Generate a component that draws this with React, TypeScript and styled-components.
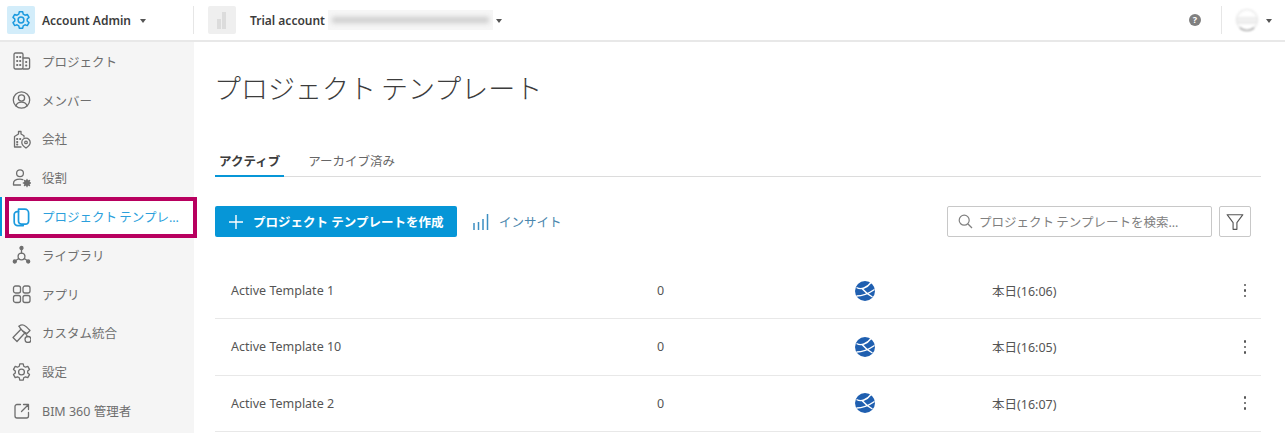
import React from "react";
import styled, { createGlobalStyle } from "styled-components";

const FONT = `"Noto Sans", "Noto Sans CJK JP", sans-serif`;

const GlobalStyle = createGlobalStyle`
  html, body {
    margin: 0;
    padding: 0;
    background: #fff;
    overflow: hidden;
  }
  * { box-sizing: border-box; }
`;

const Page = styled.div`
  width: 1285px;
  height: 433px;
  display: flex;
  flex-direction: column;
  font-family: ${FONT};
  color: #3c3c3c;
  overflow: hidden;
`;

const Header = styled.header`
  height: 42px;
  flex-shrink: 0;
  display: flex;
  align-items: center;
  padding: 0 13px 0 7px;
  background: #fff;
  border-bottom: 2px solid #e8e8e8;
`;

const Tile = styled.div<{ $active?: boolean }>`
  width: 28px;
  height: 28px;
  border-radius: 2px;
  display: flex;
  align-items: center;
  justify-content: center;
  background: ${(p) => (p.$active ? "#d3edfa" : "#efefef")};
  color: ${(p) => (p.$active ? "#1b9ade" : "#dcdcdc")};
`;

const HeaderLabel = styled.span<{ $gap: number }>`
  margin-left: ${(p) => p.$gap}px;
  font-size: 12px;
  font-weight: 600;
  color: #3c3c3c;
  white-space: nowrap;
`;

const Caret = styled.span<{ $gap: number }>`
  width: 0;
  height: 0;
  margin-left: ${(p) => p.$gap}px;
  margin-top: 1px;
  border-left: 3.5px solid transparent;
  border-right: 3.5px solid transparent;
  border-top: 4px solid #555;
`;

const HeaderDivider = styled.div<{ $left: number; $right: number }>`
  width: 1px;
  height: 28px;
  margin-left: ${(p) => p.$left}px;
  margin-right: ${(p) => p.$right}px;
  background: #e6e6e6;
`;

const BlurBox = styled.div`
  width: 165px;
  height: 20px;
  margin-left: 3px;
  display: flex;
  align-items: center;
  padding: 0 4px;
  background: #f6f6f6;
`;

const BlurBar = styled.div`
  width: 100%;
  height: 6px;
  background: #cdcdcd;
  filter: blur(2.5px);
`;

const Spacer = styled.div`
  flex: 1;
`;

const HelpBadge = styled.div`
  width: 12px;
  height: 12px;
  border-radius: 50%;
  background: #808080;
  color: #fff;
  font-size: 9px;
  font-weight: 700;
  line-height: 12px;
  text-align: center;
`;

const Avatar = styled.div`
  width: 22px;
  height: 22px;
  border-radius: 50%;
  border: 1px solid #e4e4e4;
  border-bottom: 1px solid #8c8c8c;
  background: linear-gradient(#fff 30%, #ececec 40%, #f5f5f5 55%, #e6e6e6 62%, #fff 74%);
  filter: blur(0.8px);
`;

const Body = styled.div`
  flex: 1;
  display: flex;
  min-height: 0;
`;

const Sidebar = styled.nav`
  width: 194px;
  flex-shrink: 0;
  background: #f5f5f5;
  position: relative;
`;

const NavItem = styled.div<{ $active?: boolean }>`
  height: 38.8px;
  display: flex;
  align-items: center;
  padding-left: 12px;
  gap: 11px;
  font-size: 12.5px;
  word-spacing: ${(p) => (p.$active ? "-1px" : "0")};
  color: ${(p) => (p.$active ? "#2b9fdc" : "#6e6e6e")};
  background: ${(p) => (p.$active ? "#fff" : "transparent")};
  box-shadow: ${(p) => (p.$active ? "inset 2px 0 0 #0696d7" : "none")};
  white-space: nowrap;
`;

const NavIcon = styled.svg`
  width: 19px;
  height: 20px;
  flex-shrink: 0;
  fill: none;
  stroke: currentColor;
  stroke-width: 1.3;
  stroke-linecap: round;
  stroke-linejoin: round;
`;

const NavIconSlot = styled.span<{ $active?: boolean }>`
  display: flex;
  color: ${(p) => (p.$active ? "#1b9ade" : "#6e6e6e")};
`;

/* annotation drawn over the screenshot */
const Highlight = styled.div`
  position: absolute;
  left: 5px;
  top: 155px;
  width: 192px;
  height: 41px;
  border: 4px solid #b8005f;
  pointer-events: none;
`;

const Main = styled.main`
  flex: 1;
  min-width: 0;
  padding: 0 24px 0 21px;
  background: #fff;
`;

const Title = styled.h1`
  margin: 25px 0 0 -1px;
  height: 44px;
  font-size: 27px;
  font-weight: 300;
  word-spacing: -2px;
  line-height: 44px;
  color: #3c3c3c;
  white-space: nowrap;
`;

const Tabs = styled.div`
  margin-top: 34px;
  height: 32px;
  display: flex;
  gap: 20px;
  border-bottom: 1px solid #dcdcdc;
`;

const Tab = styled.div<{ $active?: boolean }>`
  padding: 0 4px;
  height: 32px;
  line-height: 34px;
  font-size: 12.5px;
  font-weight: ${(p) => (p.$active ? 600 : 400)};
  color: ${(p) => (p.$active ? "#3c3c3c" : "#666")};
  border-bottom: 2px solid ${(p) => (p.$active ? "#0696d7" : "transparent")};
`;

const Toolbar = styled.div`
  margin-top: 29px;
  height: 31px;
  display: flex;
  align-items: center;
`;

const PrimaryButton = styled.button`
  width: 242px;
  height: 31px;
  display: flex;
  align-items: center;
  padding: 0 0 0 13px;
  gap: 9px;
  border: none;
  border-radius: 2px;
  background: #0696d7;
  color: #fff;
  font-family: ${FONT};
  font-size: 12.5px;
  font-weight: 600;
  white-space: nowrap;
`;

const InsightLink = styled.div`
  margin-left: 15px;
  display: flex;
  align-items: center;
  gap: 9px;
  font-size: 12.5px;
  color: #4a86ad;
`;

const SearchBox = styled.div`
  width: 265px;
  height: 31px;
  display: flex;
  align-items: center;
  padding-left: 10px;
  gap: 6px;
  border: 1px solid #c8c8c8;
  border-radius: 2px;
  font-size: 12.5px;
  word-spacing: -1px;
  color: #808080;
  white-space: nowrap;
`;

const FilterButton = styled.div`
  width: 32px;
  height: 31px;
  margin-left: 7px;
  margin-right: 10px;
  display: flex;
  align-items: center;
  justify-content: center;
  border: 1px solid #c8c8c8;
  border-radius: 2px;
  color: #555;
`;

const Table = styled.div`
  margin-top: 26px;
  width: 1046px;
`;

const Row = styled.div`
  height: 56.3px;
  display: grid;
  grid-template-columns: 426px 198px 137px 1fr 32px;
  align-items: center;
  padding-left: 16px;
  border-bottom: 1px solid #e8e8e8;
  font-size: 12.5px;
  color: #555;
`;

const Kebab = styled.div`
  display: flex;
  flex-direction: column;
  align-items: center;
  gap: 3px;
  width: 32px;
`;

const KebabDot = styled.span`
  width: 2.5px;
  height: 2.5px;
  border-radius: 50%;
  background: #555;
`;

const GlobeIcon = () => (
  <svg width="20" height="20" viewBox="0 0 20 20" style={{ display: "block" }}>
    <circle cx="10" cy="10" r="10" fill="#1f5fb0" />
    <path
      d="M1.5 6.5 C6 9 12 7 16 1.5 M7.5 8 C10 11 14 14 17.5 16 M1.5 15 C7 15 13 13 19.5 8.5"
      fill="none"
      stroke="#fff"
      strokeWidth="1.4"
    />
  </svg>
);

const icons: Record<string, React.ReactNode> = {
  project: (
    <>
      <rect x="2" y="2" width="9" height="16" rx="1.4" />
      <path d="M11 7h5.2a1.4 1.4 0 0 1 1.4 1.4v8.2a1.4 1.4 0 0 1-1.4 1.4H11" />
      <path d="M5 6h.4M8 6h.4M5 10h.4M8 10h.4M5 14h.4M8 14h.4M14 11h.4M14 14.5h.4" strokeWidth="1.8" />
    </>
  ),
  member: (
    <>
      <circle cx="9.5" cy="10" r="8.2" />
      <circle cx="9.5" cy="8" r="3.1" />
      <path d="M4 15.8c.8-2.4 2.9-3.7 5.5-3.7s4.7 1.3 5.5 3.7" />
    </>
  ),
  company: (
    <>
      <path d="M9 18H2.5V7.5l4-2.5V2.5h2.5V5l3 1.8V8" />
      <path d="M5 10h.4M8 10h.4M5 13h.4M5 15.5h.4" strokeWidth="1.8" />
      <path d="M14 19c-2.8-2-4.2-3.8-4.2-5.6a4.2 4.2 0 0 1 8.4 0c0 1.8-1.4 3.6-4.2 5.6z" />
      <circle cx="14" cy="13.4" r="1.3" />
    </>
  ),
  role: (
    <>
      <circle cx="8" cy="5.2" r="3.4" />
      <path d="M1.5 17v-1.5c0-2.8 2.8-4.3 6.5-4.3 1 0 2 .1 2.8.4M1.5 17h7" />
      <circle cx="15" cy="15" r="2.4" fill="currentColor" />
      <path d="M15 11.3v1.2M15 17.5v1.2M11.3 15h1.2M17.5 15h1.2M12.4 12.4l.8.8M16.8 16.8l.8.8M12.4 17.6l.8-.8M16.8 13.2l.8-.8" />
    </>
  ),
  template: (
    <>
      <path d="M6.5 2.2h6.3a3.8 3.8 0 0 1 3.8 3.8v8.2a3 3 0 0 1-3 3H9.5a3 3 0 0 1-3-3V2.2z" strokeWidth="1.7" />
      <path d="M6.5 4.6H5.2a3 3 0 0 0-3 3V15a3.6 3.6 0 0 0 3.6 3.6h5.5" strokeWidth="1.7" />
    </>
  ),
  library: (
    <>
      <circle cx="9.5" cy="3" r="1.5" fill="currentColor" />
      <circle cx="2.8" cy="16.5" r="1.5" fill="currentColor" />
      <circle cx="16.2" cy="16.5" r="1.5" fill="currentColor" />
      <circle cx="9.5" cy="11.5" r="3.4" />
      <path d="M9.5 4.5v3.6M3.8 15.5l3-2M15.2 15.5l-3-2" />
    </>
  ),
  apps: (
    <>
      <rect x="1.5" y="2" width="7" height="7" rx="2" />
      <rect x="11" y="2" width="7" height="7" rx="2" />
      <rect x="1.5" y="11.5" width="7" height="7" rx="2" />
      <rect x="11" y="11.5" width="7" height="7" rx="2" />
    </>
  ),
  custom: (
    <>
      <path d="M1 14.5 L9 6.3 L12.8 10 L5 18.5 Z" />
      <path d="M7 3.2 C10.5 0.5 13 2 18 7.5 L15 10.5 L11 8.3" />
      <path d="M9 6.3 L7 3.2" />
      <circle cx="16" cy="16.5" r="3" />
      <path d="M13.5 10.5 L15.5 13.5" />
    </>
  ),
  settings: (
    <>
      <path d="M7.8 1.8h3.4l.5 2.4 1.8 1 2.3-.8 1.7 3-1.8 1.6v2l1.8 1.6-1.7 3-2.3-.8-1.8 1-.5 2.4H7.8l-.5-2.4-1.8-1-2.3.8-1.7-3L3.3 11V9L1.5 7.4l1.7-3 2.3.8 1.8-1z" />
      <circle cx="9.5" cy="10" r="2.9" />
    </>
  ),
  external: (
    <>
      <path d="M8.5 3.5H5a2 2 0 0 0-2 2V15a2 2 0 0 0 2 2h9.5a2 2 0 0 0 2-2v-3.5" />
      <path d="M11.5 3.5h5v5M16.5 3.5L9.5 10.5" />
    </>
  ),
};

const navItems = [
  { icon: "project", label: "プロジェクト" },
  { icon: "member", label: "メンバー" },
  { icon: "company", label: "会社" },
  { icon: "role", label: "役割" },
  { icon: "template", label: "プロジェクト テンプレ...", active: true },
  { icon: "library", label: "ライブラリ" },
  { icon: "apps", label: "アプリ" },
  { icon: "custom", label: "カスタム統合" },
  { icon: "settings", label: "設定" },
  { icon: "external", label: "BIM 360 管理者" },
];

const rows = [
  { name: "Active Template 1", date: "本日(16:06)" },
  { name: "Active Template 10", date: "本日(16:05)" },
  { name: "Active Template 2", date: "本日(16:07)" },
];

export default function App() {
  return (
    <Page>
      <GlobalStyle />
      <Header>
        <Tile $active>
          <svg width="20" height="20" viewBox="0 0 19 20" fill="none" stroke="currentColor" strokeWidth="1.5" strokeLinejoin="round">
            {icons.settings}
          </svg>
        </Tile>
        <HeaderLabel $gap={7}>Account Admin</HeaderLabel>
        <Caret $gap={9} />
        <HeaderDivider $left={47} $right={14} />
        <Tile>
          <svg width="12" height="20" viewBox="0 0 12 20" fill="currentColor">
            <rect x="1" y="9" width="4" height="10" />
            <rect x="6" y="2" width="4" height="17" />
          </svg>
        </Tile>
        <HeaderLabel $gap={14}>Trial account</HeaderLabel>
        <BlurBox>
          <BlurBar />
        </BlurBox>
        <Caret $gap={3} />
        <Spacer />
        <HelpBadge>?</HelpBadge>
        <HeaderDivider $left={20} $right={14} />
        <Avatar />
        <Caret $gap={8} />
      </Header>
      <Body>
        <Sidebar>
          {navItems.map((item) => (
            <NavItem key={item.icon} $active={item.active}>
              <NavIconSlot $active={item.active}>
                <NavIcon viewBox="0 0 19 20">{icons[item.icon]}</NavIcon>
              </NavIconSlot>
              {item.label}
            </NavItem>
          ))}
          <Highlight />
        </Sidebar>
        <Main>
          <Title>プロジェクト テンプレート</Title>
          <Tabs>
            <Tab $active>アクティブ</Tab>
            <Tab>アーカイブ済み</Tab>
          </Tabs>
          <Toolbar>
            <PrimaryButton>
              <svg width="16" height="16" viewBox="0 0 16 16" stroke="#fff" strokeWidth="1.4">
                <path d="M8 1v14M1 8h14" />
              </svg>
              プロジェクト テンプレートを作成
            </PrimaryButton>
            <InsightLink>
              <svg width="18" height="18" viewBox="0 0 18 18" stroke="#3d8fc2" strokeWidth="1.5">
                <path d="M2 17v-7M6.5 17v-8M11 17v-11M15.5 17V1" />
              </svg>
              インサイト
            </InsightLink>
            <Spacer />
            <SearchBox>
              <svg width="15" height="15" viewBox="0 0 15 15" fill="none" stroke="#808080" strokeWidth="1.2">
                <circle cx="6.2" cy="6.2" r="5" />
                <path d="M10 10l4 4" />
              </svg>
              プロジェクト テンプレートを検索...
            </SearchBox>
            <FilterButton>
              <svg width="18" height="18" viewBox="0 0 16 16" fill="none" stroke="#555" strokeWidth="1" strokeLinejoin="round">
                <path d="M1 1.5h14L9.7 8.5v6h-3.4v-6z" />
              </svg>
            </FilterButton>
          </Toolbar>
          <Table>
            {rows.map((row) => (
              <Row key={row.name}>
                <span>{row.name}</span>
                <span>0</span>
                <GlobeIcon />
                <span>{row.date}</span>
                <Kebab>
                  <KebabDot />
                  <KebabDot />
                  <KebabDot />
                </Kebab>
              </Row>
            ))}
          </Table>
        </Main>
      </Body>
    </Page>
  );
}
